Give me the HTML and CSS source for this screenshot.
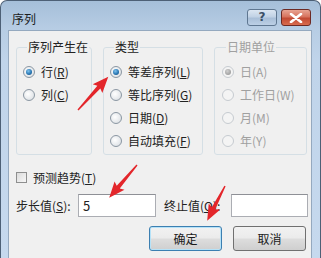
FILE: index.html
```html
<!DOCTYPE html>
<html lang="zh-CN">
<head>
    <meta charset="UTF-8">
    <title>序列</title>
    <link rel="stylesheet" href="styles.css">
</head>
<body>
    <div class="window">
        <div class="titlebar">
            <span class="title">序列</span>
            <div class="caption-btns">
                <span class="cap-btn help">?</span>
                <span class="cap-btn close">
                    <svg width="14" height="10" viewBox="0 0 14 10">
                        <path d="M2 1 L12 9 M12 1 L2 9" stroke="#fff" stroke-width="2.6" stroke-linecap="round"/>
                    </svg>
                </span>
            </div>
        </div>

        <div class="client">
            <div class="groups">
                <fieldset class="group g-rowcol">
                    <legend>序列产生在</legend>
                    <div class="option"><span class="radio checked"></span><span>行(<u>R</u>)</span></div>
                    <div class="option"><span class="radio"></span><span>列(<u>C</u>)</span></div>
                </fieldset>
                <fieldset class="group g-type">
                    <legend>类型</legend>
                    <div class="option"><span class="radio checked"></span><span>等差序列(<u>L</u>)</span></div>
                    <div class="option"><span class="radio"></span><span>等比序列(<u>G</u>)</span></div>
                    <div class="option"><span class="radio"></span><span>日期(<u>D</u>)</span></div>
                    <div class="option"><span class="radio"></span><span>自动填充(<u>F</u>)</span></div>
                </fieldset>
                <fieldset class="group g-date disabled">
                    <legend>日期单位</legend>
                    <div class="option"><span class="radio checked"></span><span>日(A)</span></div>
                    <div class="option"><span class="radio"></span><span>工作日(W)</span></div>
                    <div class="option"><span class="radio"></span><span>月(M)</span></div>
                    <div class="option"><span class="radio"></span><span>年(Y)</span></div>
                </fieldset>
            </div>

            <div class="check-row"><span class="checkbox"></span><span>预测趋势(<u>T</u>)</span></div>

            <div class="value-row">
                <label class="step-label">步长值(<u>S</u>):</label>
                <div class="textbox step">5</div>
                <label class="stop-label">终止值(<u>O</u>):</label>
                <div class="textbox stop"></div>
            </div>

            <div class="buttons">
                <button class="btn default">确定</button>
                <button class="btn">取消</button>
            </div>
        </div>

        <!-- red annotation arrows drawn over the dialog -->
        <svg class="arrows" width="321" height="258" viewBox="0 0 321 258">
            <g fill="#e3262b">
                <polygon transform="translate(78 110) rotate(-47.7)" points="0,-0.7 31,-2 29,-6.5 45,0 29,6.5 31,2 0,0.7"/>
                <polygon transform="translate(137 165) rotate(130.3)" points="0,-0.7 29,-2 27,-6.5 43,0 27,6.5 29,2 0,0.7"/>
                <polygon transform="translate(225 186) rotate(117.2)" points="0,-0.7 25,-2 23,-6.5 39,0 23,6.5 25,2 0,0.7"/>
            </g>
        </svg>
    </div>
</body>
</html>
```

FILE: styles.css
```css
* {
    margin: 0;
    padding: 0;
    box-sizing: border-box;
}

body {
    font-family: "Noto Sans CJK SC", "Liberation Sans", sans-serif;
    font-size: 12px;
    color: #222222;
    background: #ffffff;
}

.window {
    position: relative;
    width: 321px;
    height: 258px;
    border: 1px solid #4d6076;
    border-bottom: none;
    border-radius: 7px 7px 0 0;
    background: linear-gradient(to bottom, #a5bfd9 0px, #b7cde4 28px, #c0d4ea 60px, #c6d9ee 258px);
    overflow: hidden;
}

.titlebar {
    height: 29px;
    display: flex;
    align-items: flex-start;
    justify-content: space-between;
    padding: 0 9px 0 11px;
}

.title {
    font-size: 12px;
    line-height: 16px;
    margin-top: 10px;
    color: #1b1b1b;
}

.caption-btns {
    display: flex;
    gap: 4px;
    margin-top: 8px;
}

.cap-btn {
    width: 30px;
    height: 17px;
    border: 1px solid #5f7791;
    border-radius: 3px;
    display: flex;
    align-items: center;
    justify-content: center;
}

.help {
    background: linear-gradient(to bottom, #dbe6f2 0%, #c1d2e5 45%, #a9bfd8 55%, #bcd0e6 100%);
    color: #3b4f66;
    font-family: "DejaVu Sans", sans-serif;
    font-size: 12px;
    font-weight: bold;
    line-height: 15px;
}

.close {
    border-color: #6d2a24;
    background: linear-gradient(to bottom, #e8a493 0%, #d7735e 45%, #c24a34 55%, #d86c4f 100%);
}

.client {
    margin: 0 8px 0 7px;
    height: 229px;
    background: #f0f0f0;
    border: 1px solid #95a9bf;
    border-bottom: none;
    padding: 8px 0 0 7px;
}

.groups {
    display: flex;
    gap: 11px;
}

.group {
    height: 116px;
    border: 1px solid #d5dfe5;
    border-radius: 3px;
    padding: 5px 0 0 6px;
}

.group legend {
    line-height: 16px;
    padding: 0 1px;
    margin-left: 4px;
}

.g-rowcol {
    width: 76px;
}

.g-type {
    width: 100px;
}

.g-date {
    width: 93px;
    padding-left: 7px;
}

.disabled {
    color: #a0a0a0;
}

.option {
    height: 23px;
    display: flex;
    align-items: center;
    gap: 6px;
    white-space: nowrap;
}

.radio {
    width: 12px;
    height: 12px;
    border-radius: 50%;
    border: 1px solid #8b97a3;
    background: radial-gradient(circle at 40% 40%, #ffffff 0%, #e6e9ec 60%, #d2d6da 100%);
    display: flex;
    align-items: center;
    justify-content: center;
    flex-shrink: 0;
}

.radio.checked::after {
    content: "";
    width: 6px;
    height: 6px;
    border-radius: 50%;
    background: radial-gradient(circle at 40% 35%, #7fc3ee 0%, #2a78b5 55%, #15456e 100%);
}

.disabled .radio {
    border-color: #c6cbd0;
    background: #f4f4f4;
}

.disabled .radio.checked::after {
    background: radial-gradient(circle at 40% 35%, #d0d0d0 0%, #a7a7a7 60%, #8c8c8c 100%);
}

.check-row {
    margin-top: 14px;
    height: 16px;
    display: flex;
    align-items: center;
    gap: 6px;
}

.checkbox {
    width: 11px;
    height: 11px;
    border: 1px solid #8e8f8f;
    background: linear-gradient(135deg, #dcdcdc, #f7f7f7);
}

.value-row {
    margin-top: 9px;
    height: 23px;
    display: flex;
    align-items: center;
}

.step-label {
    width: 62px;
}

.textbox {
    height: 23px;
    border: 1px solid #abadb3;
    border-top-color: #8e9096;
    background: #ffffff;
    padding: 0 4px;
    line-height: 21px;
    font-size: 13px;
}

.step {
    width: 78px;
}

.stop-label {
    width: 67px;
    margin-left: 8px;
}

.stop {
    width: 77px;
}

.buttons {
    margin-top: 9px;
    padding-left: 133px;
    display: flex;
    gap: 11px;
}

.btn {
    width: 73px;
    height: 25px;
    font-family: inherit;
    font-size: 12px;
    color: #1a1a1a;
    border: 1px solid #707070;
    border-radius: 3px;
    background: linear-gradient(to bottom, #f2f2f2 0%, #ebebeb 48%, #dddddd 52%, #cfcfcf 100%);
}

.btn.default {
    border-color: #3c7fb1;
    box-shadow: inset 0 0 0 1px #b5e2f8;
}

.arrows {
    position: absolute;
    left: -1px;
    top: -1px;
    pointer-events: none;
}
```
